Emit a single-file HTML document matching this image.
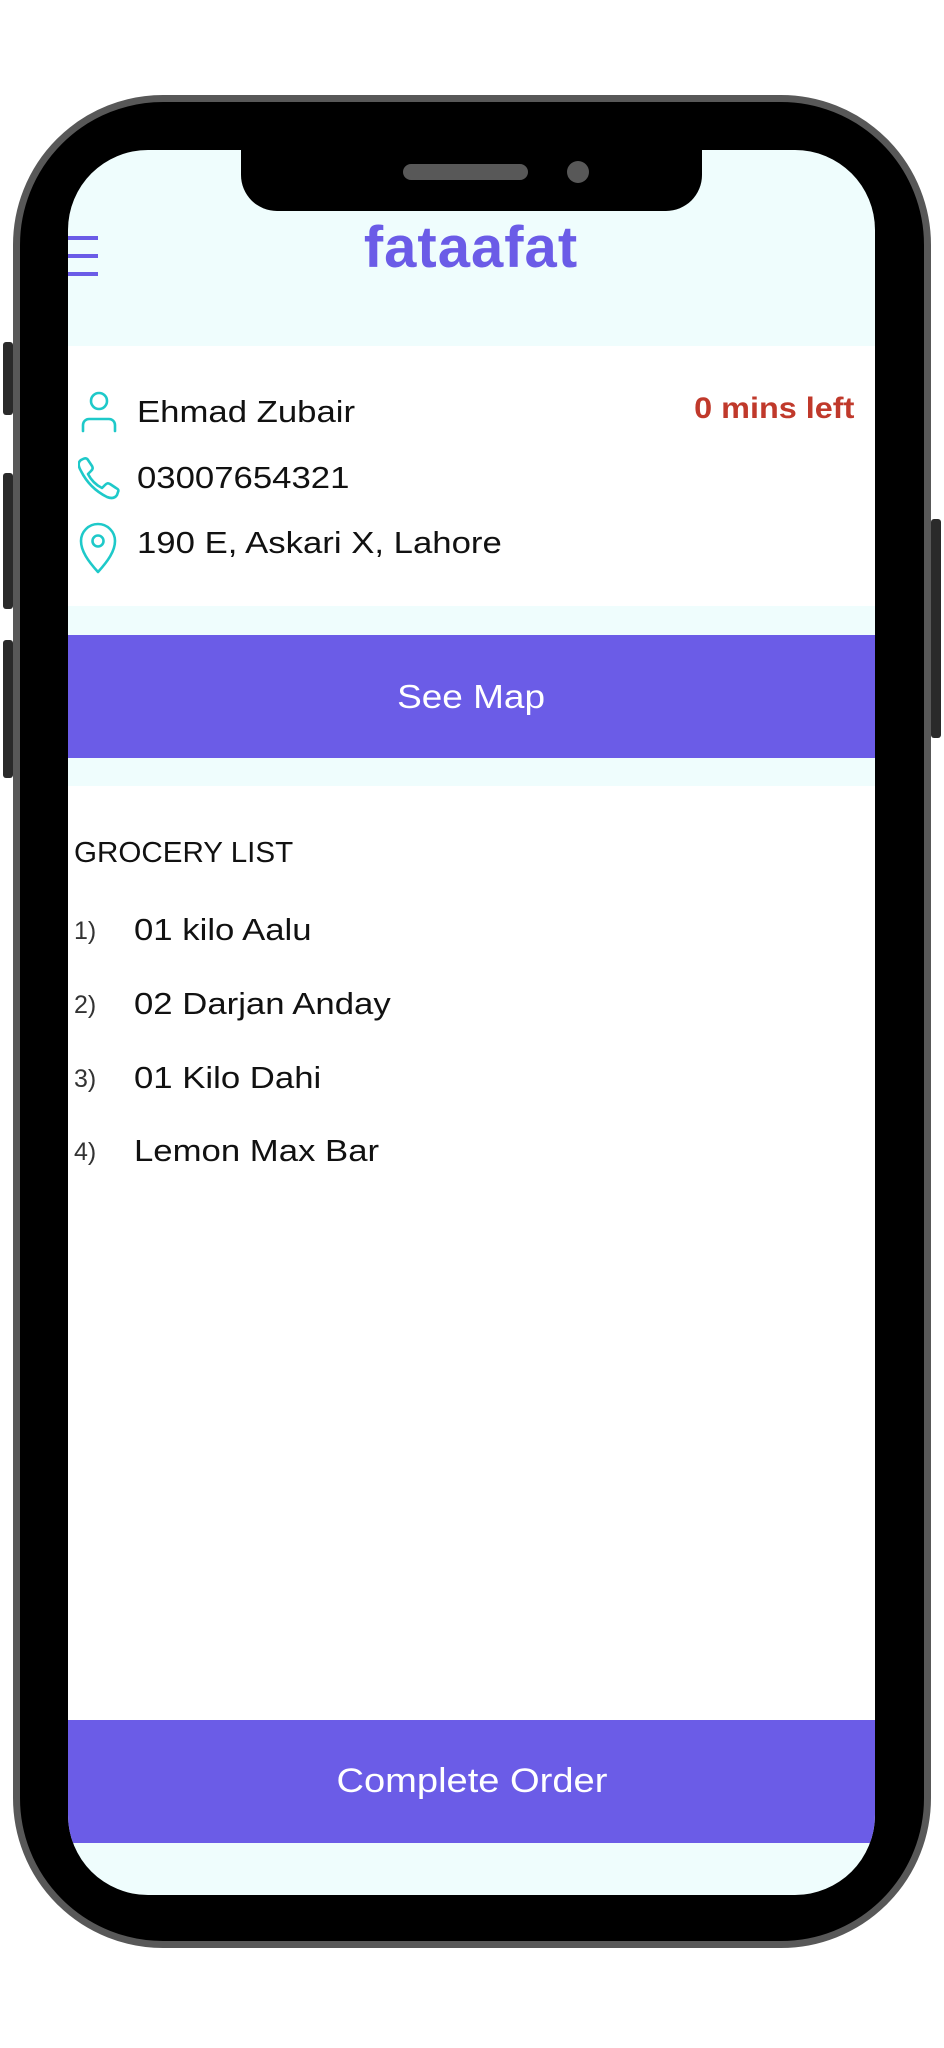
<!DOCTYPE html>
<html><head><meta charset="utf-8"><style>
*{margin:0;padding:0;box-sizing:border-box}
body{width:944px;height:2048px;background:#fff;position:relative;overflow:hidden;font-family:"Liberation Sans",sans-serif}
.abs{position:absolute}
.phone{left:13px;top:95px;width:918px;height:1853px;background:#000;border:7px solid #585858;border-radius:150px}
.screen{left:68px;top:150px;width:807px;height:1745px;background:#effdfd;border-radius:80px;overflow:hidden}
.btn{background:#2a2a2a;border-radius:3px}
.txt{font-size:31px;color:#111;white-space:nowrap;transform:scaleX(1.12);transform-origin:left center}
.bar{left:0;width:807px;background:#6b5ce7;color:#fff;font-size:31px;display:flex;align-items:center;justify-content:center}
.bar span{display:inline-block;transform:scaleX(1.12)}
</style></head><body>
<div class="abs btn" style="left:3px;top:342px;width:10px;height:73px"></div>
<div class="abs btn" style="left:3px;top:473px;width:10px;height:136px"></div>
<div class="abs btn" style="left:3px;top:640px;width:10px;height:138px"></div>
<div class="abs btn" style="left:931px;top:519px;width:10px;height:219px"></div>
<div class="abs phone"></div>
<div class="abs screen">
  <div class="abs" style="left:0;top:196px;width:807px;height:260px;background:#fff"></div>
  <div class="abs" style="left:0;top:636px;width:807px;height:934px;background:#fff"></div>
  <div class="abs bar" style="top:485px;height:123px;font-size:33px"><span>See Map</span></div>
  <div class="abs bar" style="top:1570px;height:123px;font-size:34px"><span>Complete Order</span></div>
</div>
<div class="abs" style="left:241px;top:140px;width:461px;height:71px;background:#000;border-radius:0 0 36px 36px"></div>
<div class="abs" style="left:403px;top:164px;width:125px;height:16px;background:#585858;border-radius:8px"></div>
<div class="abs" style="left:567px;top:161px;width:22px;height:22px;background:#585858;border-radius:50%"></div>
<div class="abs" style="left:68px;top:236px;width:30px;height:4px;background:#6b5ce7"></div>
<div class="abs" style="left:68px;top:254px;width:30px;height:4px;background:#6b5ce7"></div>
<div class="abs" style="left:68px;top:272px;width:30px;height:4px;background:#6b5ce7"></div>
<div class="abs" style="left:333px;top:214px;width:276px;text-align:center;font-size:58px;font-weight:bold;color:#6b5ce7;letter-spacing:1px">fataafat</div>
<svg class="abs" style="left:78px;top:390px" width="42" height="186" viewBox="0 0 42 186" fill="none" stroke="#1ec9c9" stroke-width="2.6" stroke-linecap="round" stroke-linejoin="round">
<circle cx="21" cy="11" r="8"/><path d="M5 41v-6a6 6 0 0 1 6-6h20a6 6 0 0 1 6 6v6"/>
<path d="M3 70c-3 2-3 6 0 11c6 12 14 20 26 26c5 2 8 1 10-2l1-3c1-2 0-3-2-4l-6-4c-2-1-3-1-5 1l-3 3c-6-3-11-8-14-14l3-3c2-2 2-3 1-5l-4-6c-1-2-3-2-5-1z"/>
<path d="M20 182c-10-11-17-21-17-31a17 17 0 0 1 34 0c0 10-7 20-17 31z"/><circle cx="20" cy="151" r="5.5"/>
</svg>
<div class="abs txt" style="left:137px;top:394px">Ehmad Zubair</div>
<div class="abs txt" style="left:137px;top:460px">03007654321</div>
<div class="abs txt" style="left:137px;top:525px">190 E, Askari X, Lahore</div>
<div class="abs" style="right:90px;top:392px;font-size:30px;font-weight:bold;color:#c0392b;transform:scaleX(1.08);transform-origin:right center">0 mins left</div>
<div class="abs txt" style="left:74px;top:837px;font-size:29px;transform:scaleX(1.02)">GROCERY LIST</div>
<div class="abs" style="left:74px;top:917px;font-size:25px;color:#333">1)</div>
<div class="abs txt" style="left:134px;top:912px">01 kilo Aalu</div>
<div class="abs" style="left:74px;top:991px;font-size:25px;color:#333">2)</div>
<div class="abs txt" style="left:134px;top:986px">02 Darjan Anday</div>
<div class="abs" style="left:74px;top:1065px;font-size:25px;color:#333">3)</div>
<div class="abs txt" style="left:134px;top:1060px">01 Kilo Dahi</div>
<div class="abs" style="left:74px;top:1138px;font-size:25px;color:#333">4)</div>
<div class="abs txt" style="left:134px;top:1133px">Lemon Max Bar</div>
</body></html>
